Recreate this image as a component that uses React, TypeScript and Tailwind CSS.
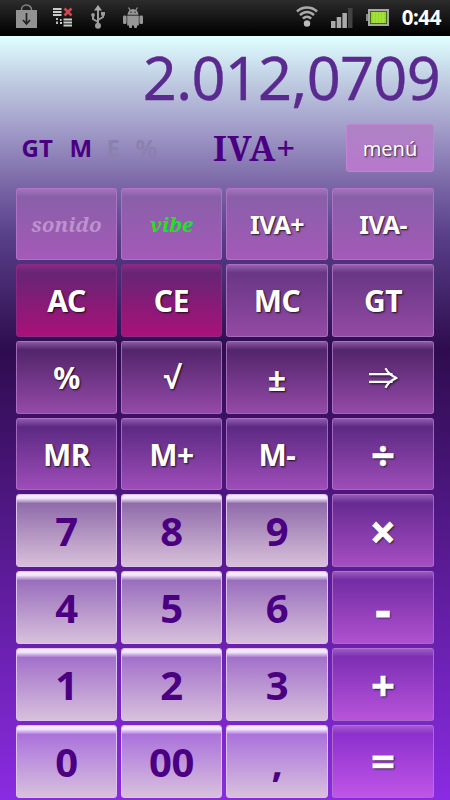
import clsx from "clsx";

type KeyItem = {
  label: string;
  tone: string;
  kind: "fn" | "danger" | "digit" | "toggle";
  text: string;
};

const fn = "pt-px text-[30px] tracking-[-0.4px]";
const op = "text-[42px] [-webkit-text-stroke:0.4px_white]";
const digit = "pt-px text-[40px] tracking-[-0.5px]";

const rows: KeyItem[][] = [
  [
    { label: "sonido", kind: "toggle", tone: "from-[#8660a6] to-[#a459b9]", text: "text-[20.5px] text-[#bd92cd]" },
    { label: "vibe", kind: "toggle", tone: "from-[#8660a6] to-[#a459b9]", text: "text-[20.5px] text-[#22e222]" },
    { label: "IVA+", kind: "fn", tone: "from-[#8660a6] to-[#a459b9]", text: "pt-px text-[25px] tracking-[-0.7px]" },
    { label: "IVA-", kind: "fn", tone: "from-[#8660a6] to-[#a459b9]", text: "pt-px text-[25px] tracking-[-0.7px]" },
  ],
  [
    { label: "AC", kind: "danger", tone: "from-[#5e2775] to-[#a91179]", text: fn },
    { label: "CE", kind: "danger", tone: "from-[#5e2775] to-[#a91179]", text: fn },
    { label: "MC", kind: "fn", tone: "from-[#643480] to-[#934aa4]", text: fn },
    { label: "GT", kind: "fn", tone: "from-[#643480] to-[#934aa4]", text: fn },
  ],
  [
    { label: "%", kind: "fn", tone: "from-[#4a2063] to-[#944aa8]", text: fn },
    { label: "√", kind: "fn", tone: "from-[#4a2063] to-[#944aa8]", text: fn },
    { label: "±", kind: "fn", tone: "from-[#4a2063] to-[#944aa8]", text: "pt-0.5 text-[32px]" },
    { label: "⇒", kind: "fn", tone: "from-[#4a2063] to-[#944aa8]", text: fn },
  ],
  [
    { label: "MR", kind: "fn", tone: "from-[#54257c] to-[#9e4db8]", text: fn },
    { label: "M+", kind: "fn", tone: "from-[#54257c] to-[#9e4db8]", text: fn },
    { label: "M-", kind: "fn", tone: "from-[#54257c] to-[#9e4db8]", text: fn },
    { label: "÷", kind: "fn", tone: "from-[#54257c] to-[#9e4db8]", text: "text-[42px] [-webkit-text-stroke:0.4px_white]" },
  ],
  [
    { label: "7", kind: "digit", tone: "from-[#8660a4] to-[#d8c0da]", text: digit },
    { label: "8", kind: "digit", tone: "from-[#8660a4] to-[#d8c0da]", text: digit },
    { label: "9", kind: "digit", tone: "from-[#8660a4] to-[#d8c0da]", text: digit },
    { label: "×", kind: "fn", tone: "from-[#5f268c] to-[#a64dc2]", text: "text-[46px] [-webkit-text-stroke:0.7px_white]" },
  ],
  [
    { label: "4", kind: "digit", tone: "from-[#9163b8] to-[#d8c0dc]", text: digit },
    { label: "5", kind: "digit", tone: "from-[#9163b8] to-[#d8c0dc]", text: digit },
    { label: "6", kind: "digit", tone: "from-[#9163b8] to-[#d8c0dc]", text: digit },
    { label: "-", kind: "fn", tone: "from-[#6b279e] to-[#b051d0]", text: "pt-1 text-[47px] [-webkit-text-stroke:1px_white]" },
  ],
  [
    { label: "1", kind: "digit", tone: "from-[#9b66c8] to-[#d8c0dc]", text: digit },
    { label: "2", kind: "digit", tone: "from-[#9b66c8] to-[#d8c0dc]", text: digit },
    { label: "3", kind: "digit", tone: "from-[#9b66c8] to-[#d8c0dc]", text: digit },
    { label: "+", kind: "fn", tone: "from-[#762ab0] to-[#b854da]", text: op },
  ],
  [
    { label: "0", kind: "digit", tone: "from-[#a568dc] to-[#d8c0dc]", text: digit },
    { label: "00", kind: "digit", tone: "from-[#a568dc] to-[#d8c0dc]", text: digit },
    { label: ",", kind: "digit", tone: "from-[#a568dc] to-[#d8c0dc]", text: digit },
    { label: "=", kind: "fn", tone: "from-[#862bca] to-[#bf56e6]", text: "pb-1 text-[42px] [-webkit-text-stroke:0.4px_white]" },
  ],
];

const serif = "font-['Noto_Serif','DejaVu_Serif',serif]";

function ArrowGlyph() {
  return (
    <svg width="30" height="22" viewBox="0 0 30 22" fill="none" stroke="#fff" strokeWidth="2.3" className="drop-shadow-[1px_1px_1px_#000000aa]">
      <path d="M1 7.2H24.500M1 14.800H24.500" />
      <path d="M17.500 1.300C20 6 23.500 9 28.500 11C23.500 13 20 16 17.500 20.700" strokeLinejoin="round" />
    </svg>
  );
}

function Key({ item }: { item: KeyItem }) {
  return (
    <button
      className={clsx(
        "flex flex-col overflow-hidden rounded-[3px] border bg-linear-to-b/srgb",
        item.tone,
        item.kind === "digit" && "border-[#dcc3ec]",
        (item.kind === "fn" || item.kind === "toggle") && "border-[#b478cc]/80",
        item.kind === "danger" && "border-[#8a2a86]",
      )}
    >
      <span
        className={clsx(
          "h-2 w-full shrink-0 bg-linear-to-b/srgb",
          item.kind === "digit" && "from-[#f3e8fb] from-40% to-white/10",
          (item.kind === "fn" || item.kind === "toggle") && "from-[#b87fd0]/60 to-transparent",
          item.kind === "danger" && "from-[#972a85]/80 to-transparent",
        )}
      />
      <span
        className={clsx(
          "-mt-2 flex w-full flex-1 items-center justify-center font-bold leading-none",
          item.text,
          item.kind === "toggle" && `${serif} italic`,
          item.kind === "digit" && "text-[#4b0082]",
          (item.kind === "fn" || item.kind === "danger") && "text-white [text-shadow:1px_1px_2px_#000000cc]",
        )}
      >
        {item.label === "⇒" ? <ArrowGlyph /> : item.label}
      </span>
    </button>
  );
}

function StatusBar() {
  return (
    <header className="flex h-9 items-center border-b border-black bg-linear-to-b/srgb from-[#2c2c2c] to-black pl-4 pr-[9px]">
      <svg width="21" height="24" viewBox="0 0 21 24" className="-mt-1">
        <path d="M5.500 8V5.500A5 4.500 0 0 1 15.500 5.500V8" fill="none" stroke="#858585" strokeWidth="1.500" />
        <path d="M0 6H21V24H0Z" fill="#929292" />
        <path d="M10.500 9V19M7 16L10.500 20L14 16" fill="none" stroke="#222" strokeWidth="1.700" />
      </svg>
      <svg width="20" height="20" viewBox="0 0 20 20" className="-mt-0.5 ml-4">
        <path d="M0 2H8.500M0 5H8.500M0 8H8.500M10.500 12.500H19M10.500 15.500H19M10.500 18.500H19" stroke="#c9cec9" strokeWidth="2" />
        <path d="M4 11V13M4 14.500V17M7 16H9M7 13H8.500" stroke="#c9cec9" strokeWidth="1.800" />
        <path d="M11.500 1.500L18.500 8.500M18.500 1.500L11.500 8.500" stroke="#cf4650" strokeWidth="2.700" />
      </svg>
      <svg width="14" height="24" viewBox="0 0 14 24" className="-mt-0.5 ml-[18px]" fill="none" stroke="#9b9b9b" strokeWidth="2">
        <path d="M7 4V20M7 17L2 14V10M7 15L12 12V8" />
        <path d="M7 0L11 5.500H3Z" fill="#aaa" stroke="none" />
        <circle cx="7" cy="20.800" r="3" fill="#9b9b9b" stroke="none" />
        <circle cx="2" cy="10" r="1.900" fill="#9b9b9b" stroke="none" />
        <path d="M10 7H14V10.500H10Z" fill="#9b9b9b" stroke="none" />
      </svg>
      <svg width="20" height="21" viewBox="0 0 20 21" className="ml-[18px]" fill="#969696">
        <path d="M4.500 7.800A5.500 5.800 0 0 1 15.500 7.800Z" />
        <path d="M5.500 0.500L7.500 4M14.500 0.500L12.500 4" stroke="#969696" strokeWidth="1.200" />
        <path d="M4.200 8.600H15.800V18.500H4.200Z" />
        <rect x="0" y="8.500" width="3.600" height="8.500" rx="1.300" />
        <rect x="16.400" y="8.500" width="3.600" height="8.500" rx="1.300" />
        <rect x="6" y="16" width="3" height="5" rx="1" />
        <rect x="11" y="16" width="3" height="5" rx="1" />
        <circle cx="8" cy="5.200" r=".7" fill="#222" />
        <circle cx="12" cy="5.200" r=".7" fill="#222" />
      </svg>
      <svg width="22" height="21" viewBox="0 0 22 21" className="-mt-0.5 ml-auto" fill="none" stroke="#a9a9a9" strokeWidth="2.500">
        <path d="M1 5.500C6.500 0 15.500 0 21 5.500M4 9.200C8 5 14 5 18 9.200M6.900 12.700C9.300 10 12.700 10 15.100 12.700" />
        <circle cx="11" cy="17.500" r="3.200" fill="#bbb" stroke="none" />
      </svg>
      <svg width="22" height="20" viewBox="0 0 22 20" className="ml-[13px]">
        <path d="M0 13H4.500V20H0ZM5.700 9H10.200V20H5.700ZM11.400 5H15.900V20H11.400Z" fill="#aaa" />
        <path d="M17 0H21.500V20H17Z" fill="#424242" />
      </svg>
      <svg width="23" height="17" viewBox="0 0 23 17" className="ml-[13px]">
        <path d="M0 5H3V12H0Z" fill="#888" />
        <rect x="3" y="1" width="19" height="15" fill="#436b10" stroke="#a7a7a7" strokeWidth="2" />
        <path d="M5 3H20V14H5Z" fill="#95d925" />
        <path d="M8 3V14M11 3V14M14 3V14M17 3V14" stroke="#b5ea58" />
      </svg>
      <span className="ml-[13px] text-[20.5px] font-bold leading-none tracking-[-0.4px] text-white">0:44</span>
    </header>
  );
}

export default function App() {
  return (
    <div className="flex h-[800px] w-[450px] flex-col overflow-hidden bg-black font-['Noto_Sans','Open_Sans',sans-serif]">
      <StatusBar />
      <main className="flex flex-1 flex-col bg-[linear-gradient(to_bottom,#e0ffff_0px,#bfcbe1_46px,#9f99c7_96px,#7c69a8_146px,#583f89_200px,#2e0c4e_312px,#8a2be2_764px)]">
        <div className="flex h-[82px] items-center justify-end pr-2.5 text-[59.5px] leading-none tracking-[-0.7px] text-[#5b2a90] [-webkit-text-stroke:0.3px_#5b2a90]">
          2.012,0709
        </div>
        <div className="flex h-[54px] items-start text-2xl font-bold text-[#4b0082]">
          <span className="ml-[21.5px] mt-[18px] w-12 leading-none">GT</span>
          <span className="mt-[18px] w-[37px] leading-none">M</span>
          <span className="mt-[18px] w-[29px] leading-none text-[#8b80ae]">E</span>
          <span className="mt-[18px] w-[77.5px] leading-none tracking-tight text-[#8b80ae]">%</span>
          <span className={`${serif} mt-[13px] text-[34.5px] leading-none tracking-[0.6px]`}>IVA+</span>
          <button className="ml-auto mr-4 mt-1.5 h-12 w-[88px] rounded-[3px] border border-[#be86cf] bg-linear-to-b/srgb from-[#ad83c5] to-[#b878cd] pt-px text-[20px] font-normal leading-none text-white [text-shadow:1px_1px_2px_#000000cc]">
            menú
          </button>
        </div>
        <div className="mx-4 mt-4 grid grid-cols-[101px_101px_102px_102px] grid-rows-[72px_73px_73px_72px_73px_73px_73px_73px] gap-1">
          {rows.flat().map((item) => (
            <Key key={item.label + item.tone} item={item} />
          ))}
        </div>
      </main>
    </div>
  );
}
